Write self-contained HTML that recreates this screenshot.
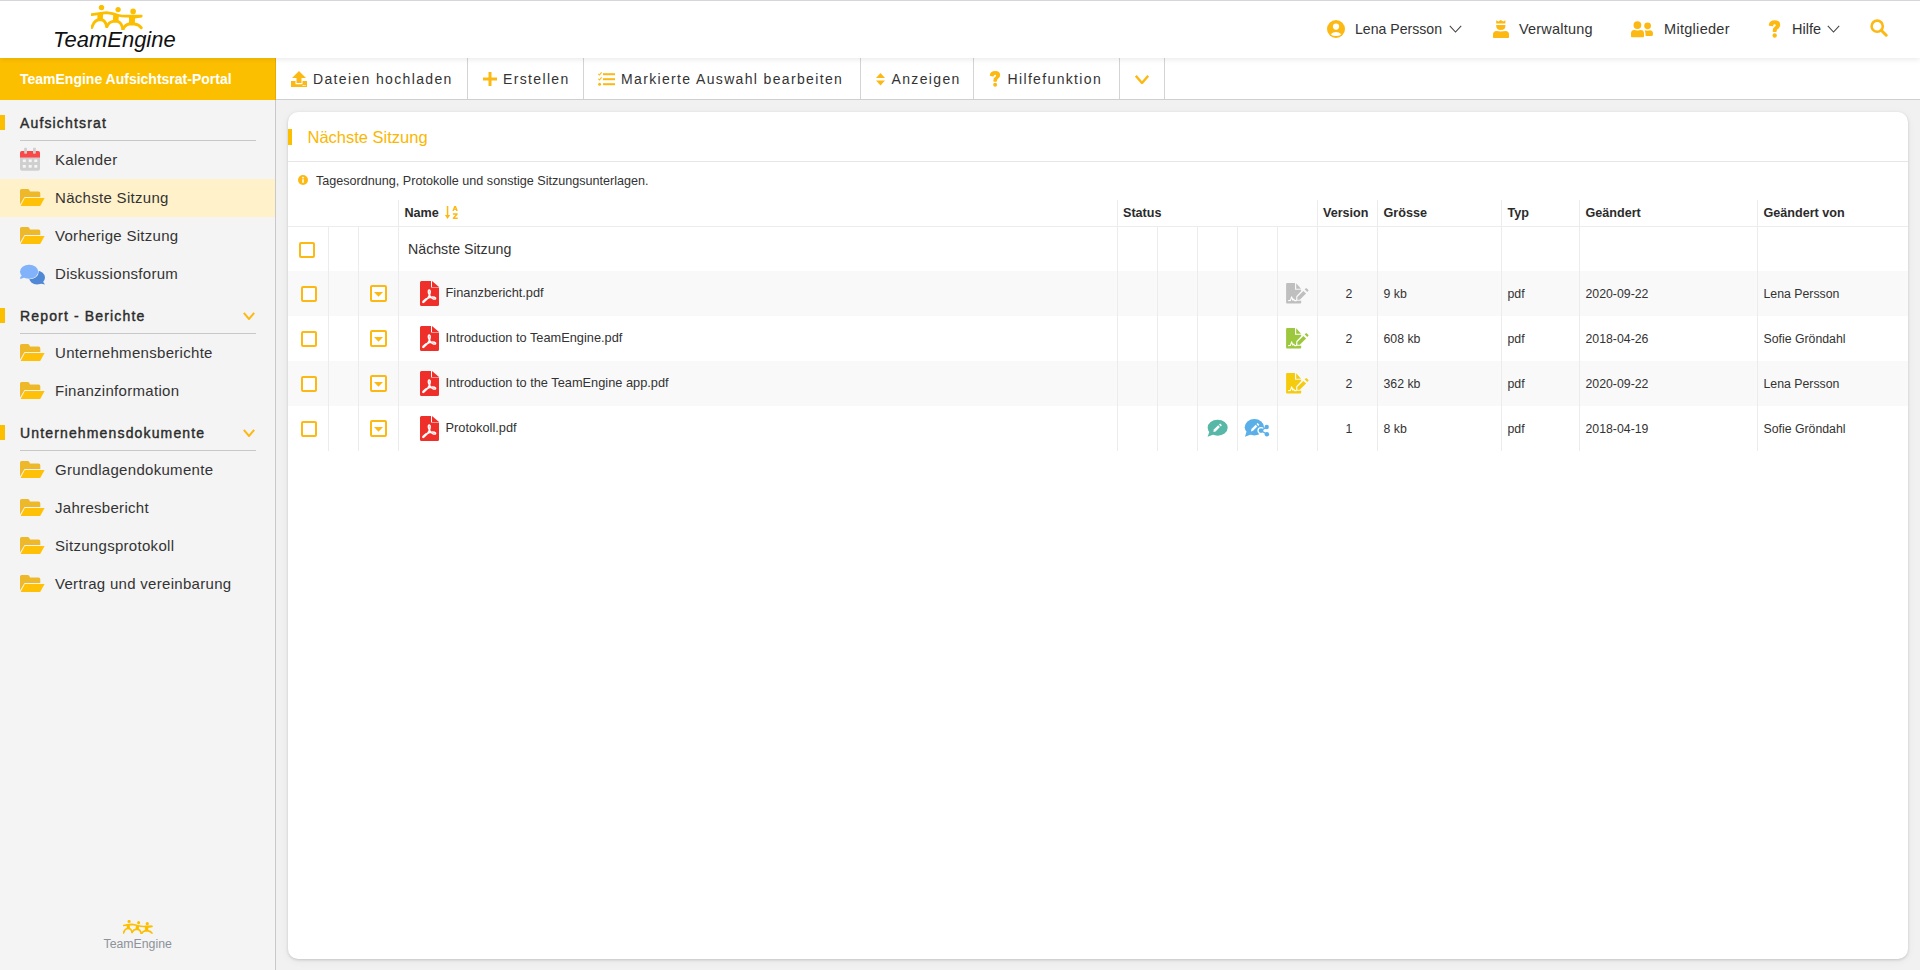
<!DOCTYPE html>
<html><head><meta charset="utf-8"><title>TeamEngine</title>
<style>
html,body{margin:0;padding:0;}
body{width:1920px;height:970px;overflow:hidden;position:relative;background:#F1F1F1;font-family:"Liberation Sans", sans-serif;}
.t{position:absolute;white-space:nowrap;line-height:1;}
</style></head><body>
<div style="position:absolute;left:0px;top:0px;width:1920px;height:58px;background:#fff;z-index:3;box-shadow:0 1px 6px rgba(0,0,0,0.10)"></div><div style="position:absolute;left:0px;top:0px;width:1920px;height:1px;background:#d5d5da;z-index:4"></div><div style="position:absolute;left:0;top:0;z-index:5"><svg style="position:absolute;left:91px;top:5px" width="52" height="25" viewBox="0 0 52 25"><g fill="#FCBF00"><circle cx="10.5" cy="2.6" r="2.75"/><circle cx="27.1" cy="4.6" r="2.65"/><circle cx="42.1" cy="6.4" r="2.8"/><path d="M37.5 10 L50.6 9.9 Q51.3 11.3 50.6 12.3 Q47 13.2 44 13.6 L38 13.6Z"/></g><g fill="none" stroke="#FCBF00" stroke-linecap="round" stroke-linejoin="round"><path d="M0.6 9.7 Q8 8.6 15.3 7.6 Q22 8.5 27 10.2 Q31 11.3 36 11.2 L50.3 11.1" stroke-width="2.7"/><path d="M9.3 8.8 L9 15.8" stroke-width="5.6" stroke-linecap="butt"/><path d="M25.1 9.6 L24.6 17" stroke-width="5.6" stroke-linecap="butt"/><path d="M41.1 10.8 L40.9 19" stroke-width="5.9" stroke-linecap="butt"/><path d="M0.8 22.5 Q3 15.5 7.5 14.8 L10.5 14.8 Q14.5 15.5 15.8 21.6" stroke-width="2.9"/><path d="M15.8 21.6 Q18 17 22 16.4 L26.5 16.4 Q30.5 17.3 31.9 24.3" stroke-width="2.9"/><path d="M31.9 24.3 Q34 19.8 38 19 L43.5 19 Q48 19.7 50.3 22.8" stroke-width="2.9"/></g></svg></div><div class="t" style="left:53px;top:28.88px;font-size:22px;color:#111;font-weight:400;letter-spacing:0px;font-style:italic;z-index:5">TeamEngine</div><div style="position:absolute;left:0;top:0;z-index:5"><svg style="position:absolute;left:1327px;top:20px" width="18" height="18" viewBox="0 0 18 18"><circle cx="9" cy="9" r="9" fill="#FDB913"/><circle cx="9" cy="6.6" r="3.1" fill="#fff"/><path d="M3.6 14.2 Q9 9.6 14.4 14.2 Q12.6 16.1 9 16.1 Q5.4 16.1 3.6 14.2Z" fill="#fff"/></svg></div><div class="t" style="left:1355px;top:22.26px;font-size:14.1px;color:#333333;font-weight:400;letter-spacing:0px;z-index:5">Lena Persson</div><div style="position:absolute;z-index:5"><svg style="position:absolute;left:1449px;top:25px" width="13" height="8" viewBox="0 0 13 8"><path d="M0.8 0.8 L6.5 7 L12.2 0.8" fill="none" stroke="#444" stroke-width="1.1"/></svg></div><div style="position:absolute;z-index:5"><svg style="position:absolute;left:1493px;top:20px" width="16" height="18" viewBox="0 0 16 18"><g fill="#FDB913"><path d="M3.2 0.2 L5.3 1.4 L7.8 0 L10.3 1.4 L12.4 0.2 L12.4 3.5 L3.2 3.5Z"/><path d="M3.2 5 L12.4 5 L12.4 6 Q12.4 9.9 7.8 9.9 Q3.2 9.9 3.2 6Z"/><path d="M0 17 L0 14.5 Q0 11 3.5 10.9 Q5.5 10.9 7.8 11.4 Q10.2 10.9 12.5 10.9 Q16 11 16 14.5 L16 17 Q16 18.1 14.9 18.1 L1.1 18.1 Q0 18.1 0 17Z"/></g></svg></div><div class="t" style="left:1519px;top:21.93px;font-size:14.5px;color:#333333;font-weight:400;letter-spacing:0.2px;z-index:5">Verwaltung</div><div style="position:absolute;z-index:5"><svg style="position:absolute;left:1631px;top:21px" width="23" height="17" viewBox="0 0 23 17"><g fill="#FDB913"><circle cx="6.4" cy="4.1" r="3.9"/><circle cx="16.6" cy="4.8" r="3.4"/><path d="M0 15.2 L0 12.5 Q0 9.2 3 9.1 Q4.8 9.1 6.4 9.6 Q8 9.1 10 9.1 Q13 9.2 13 12.5 L13 15.2 Q13 16.2 12 16.2 L1 16.2 Q0 16.2 0 15.2Z"/><path d="M13.8 9.3 Q15.5 9.3 16.6 9.7 Q18 9.3 19 9.3 Q22 9.5 22 12.5 Q22 15 21 15 L14.6 15 Q14.6 12 13.8 9.3Z"/></g></svg></div><div class="t" style="left:1664px;top:21.93px;font-size:14.5px;color:#333333;font-weight:400;letter-spacing:0.3px;z-index:5">Mitglieder</div><div style="position:absolute;z-index:5"><svg style="position:absolute;left:1768px;top:20px" width="13" height="18" viewBox="0 0 12.5 17"><path d="M1.5 4.6 Q2 0.8 6.5 0.8 Q11 0.8 11 4.6 Q11 6.8 8.6 8.2 Q7.6 8.8 7.6 10.6 L5.2 10.6 Q5.2 7.8 7 6.8 Q8.2 6 8.2 4.8 Q8.2 3.2 6.4 3.2 Q4.6 3.2 4.2 5.2Z" fill="#FDB913" stroke="#FDB913" stroke-width="1.5" stroke-linejoin="round"/><circle cx="6.4" cy="14.7" r="2.1" fill="#FDB913"/></svg></div><div class="t" style="left:1792px;top:21.93px;font-size:14.5px;color:#333333;font-weight:400;letter-spacing:0px;z-index:5">Hilfe</div><div style="position:absolute;z-index:5"><svg style="position:absolute;left:1827px;top:25px" width="13" height="8" viewBox="0 0 13 8"><path d="M0.8 0.8 L6.5 7 L12.2 0.8" fill="none" stroke="#444" stroke-width="1.1"/></svg></div><div style="position:absolute;z-index:5"><svg style="position:absolute;left:1870px;top:19px" width="18" height="18" viewBox="0 0 18 18"><circle cx="7.2" cy="7.2" r="5.6" fill="none" stroke="#FDB913" stroke-width="2.6"/><path d="M11.2 11.2 L16.2 16.2" stroke="#FDB913" stroke-width="3" stroke-linecap="round"/></svg></div><div style="position:absolute;left:0px;top:58px;width:275px;height:42px;background:#FCBF00"></div><div style="position:absolute;left:275px;top:58px;width:1px;height:42px;background:#E3AC00"></div><div class="t" style="left:20px;top:71.90px;font-size:14px;color:#fff;font-weight:700;letter-spacing:0px;">TeamEngine Aufsichtsrat-Portal</div><div style="position:absolute;left:276px;top:58px;width:1644px;height:41px;background:#fff"></div><div style="position:absolute;left:276px;top:99px;width:1644px;height:1px;background:#cfcfcf"></div><div style="position:absolute;left:467px;top:58px;width:1px;height:41px;background:#d4d4d4"></div><div style="position:absolute;left:583px;top:58px;width:1px;height:41px;background:#d4d4d4"></div><div style="position:absolute;left:860px;top:58px;width:1px;height:41px;background:#d4d4d4"></div><div style="position:absolute;left:973px;top:58px;width:1px;height:41px;background:#d4d4d4"></div><div style="position:absolute;left:1119px;top:58px;width:1px;height:41px;background:#d4d4d4"></div><div style="position:absolute;left:1164px;top:58px;width:1px;height:41px;background:#d4d4d4"></div><svg style="position:absolute;left:291px;top:71px" width="16" height="16" viewBox="0 0 16 16"><g fill="#FDB913"><path d="M8 0 L15 7 L10.5 7 L10.5 12 L5.5 12 L5.5 7 L1 7Z"/><path d="M0 10 L4.5 10 L4.5 13.2 L11.5 13.2 L11.5 10 L16 10 L16 16 L0 16Z"/></g><rect x="11.6" y="14" width="1.2" height="1" fill="#fff"/><rect x="13.4" y="14" width="1.2" height="1" fill="#fff"/></svg><div class="t" style="left:313px;top:71.85px;font-size:14px;color:#333333;font-weight:400;letter-spacing:1.35px;">Dateien hochladen</div><svg style="position:absolute;left:482.5px;top:72px" width="14" height="14" viewBox="0 0 14 14"><path d="M7 0 V14 M0 7 H14" stroke="#FDB913" stroke-width="3"/></svg><div class="t" style="left:503px;top:71.85px;font-size:14px;color:#333333;font-weight:400;letter-spacing:1.35px;">Erstellen</div><svg style="position:absolute;left:598px;top:72px" width="17" height="14" viewBox="0 0 17 14"><g fill="#FDB913"><rect x="5" y="1.2" width="12" height="2"/><rect x="5" y="6.2" width="12" height="2"/><rect x="5" y="11.2" width="12" height="2"/><circle cx="1.6" cy="12.2" r="1.5"/></g><path d="M0.3 1.8 L1.5 3 L3.6 0.4 M0.3 6.8 L1.5 8 L3.6 5.4" stroke="#FDB913" stroke-width="1.1" fill="none"/></svg><div class="t" style="left:621px;top:71.85px;font-size:14px;color:#333333;font-weight:400;letter-spacing:1.35px;">Markierte Auswahl bearbeiten</div><svg style="position:absolute;left:876px;top:73px" width="9" height="13" viewBox="0 0 9 13"><path d="M4.5 0 L9 5 L0 5Z M0 7.5 L9 7.5 L4.5 12.5Z" fill="#FDB913"/></svg><div class="t" style="left:891.5px;top:71.85px;font-size:14px;color:#333333;font-weight:400;letter-spacing:1.35px;">Anzeigen</div><svg style="position:absolute;left:989px;top:71px" width="12" height="16" viewBox="0 0 12.5 17"><path d="M1.5 4.6 Q2 0.8 6.5 0.8 Q11 0.8 11 4.6 Q11 6.8 8.6 8.2 Q7.6 8.8 7.6 10.6 L5.2 10.6 Q5.2 7.8 7 6.8 Q8.2 6 8.2 4.8 Q8.2 3.2 6.4 3.2 Q4.6 3.2 4.2 5.2Z" fill="#FDB913" stroke="#FDB913" stroke-width="1.5" stroke-linejoin="round"/><circle cx="6.4" cy="14.7" r="2.1" fill="#FDB913"/></svg><div class="t" style="left:1007.5px;top:71.85px;font-size:14px;color:#333333;font-weight:400;letter-spacing:1.35px;">Hilfefunktion</div><svg style="position:absolute;left:1135px;top:74.5px" width="14" height="9" viewBox="0 0 14 9"><path d="M0.8 0.8 L7.0 8 L13.2 0.8" fill="none" stroke="#FDB913" stroke-width="2.4"/></svg><div style="position:absolute;left:0px;top:100px;width:275px;height:870px;background:#F4F4F4"></div><div style="position:absolute;left:275px;top:100px;width:1px;height:870px;background:#c9c9c9"></div><div style="position:absolute;left:0px;top:115px;width:5px;height:15px;background:#FCBF00"></div><div class="t" style="left:20px;top:115.75px;font-size:14px;color:#2b2b2b;font-weight:400;letter-spacing:1.15px;-webkit-text-stroke:0.4px #2b2b2b">Aufsichtsrat</div><div style="position:absolute;left:20px;top:140px;width:236px;height:1px;background:#c8c8c8"></div><svg style="position:absolute;left:20px;top:147px" width="20" height="24" viewBox="0 0 20 24"><rect x="0" y="4" width="20" height="19.8" rx="2" fill="#CFCFCF"/><path d="M0 6 Q0 4 2 4 L18 4 Q20 4 20 6 L20 10.5 L0 10.5Z" fill="#FB4747"/><rect x="4.2" y="0.7" width="2.8" height="6" rx="0.8" fill="#CFCFCF"/><rect x="13" y="0.7" width="2.8" height="6" rx="0.8" fill="#CFCFCF"/><g fill="#F6F6F6"><rect x="2.8" y="12.5" width="3" height="2.6"/><rect x="8.7" y="12.5" width="3" height="2.6"/><rect x="14.3" y="12.5" width="3" height="2.6"/><rect x="2.8" y="18" width="3" height="2.7"/><rect x="8.7" y="18" width="3" height="2.7"/><rect x="14.3" y="18" width="3" height="2.7"/></g></svg><div class="t" style="left:55px;top:152.20px;font-size:15px;color:#333;font-weight:400;letter-spacing:0.3px;">Kalender</div><div style="position:absolute;left:0px;top:179px;width:275px;height:38px;background:#FFF1CA"></div><svg style="position:absolute;left:20px;top:189px" width="25" height="17" viewBox="0 0 25 17"><path d="M0 1.6 Q0 0 1.6 0 L7.8 0 Q8.6 0 9.2 0.8 L10 2.6 L18.6 2.6 Q20.3 2.6 20.3 4.3 L20.3 8 L4.5 8 L0 15.5Z" fill="#EDB92A"/><path d="M4.6 8.4 Q4.9 8.2 5.4 8.2 L25.2 8.2 L20.6 17.2 L0.1 17.2Z" fill="#fff" fill-opacity="0.0"/><path d="M4.8 9 L24.6 9 L20.2 16.9 L0.6 16.9Z" fill="#FFC107"/></svg><div class="t" style="left:55px;top:190.20px;font-size:15px;color:#333;font-weight:400;letter-spacing:0.3px;">Nächste Sitzung</div><svg style="position:absolute;left:20px;top:227px" width="25" height="17" viewBox="0 0 25 17"><path d="M0 1.6 Q0 0 1.6 0 L7.8 0 Q8.6 0 9.2 0.8 L10 2.6 L18.6 2.6 Q20.3 2.6 20.3 4.3 L20.3 8 L4.5 8 L0 15.5Z" fill="#EDB92A"/><path d="M4.6 8.4 Q4.9 8.2 5.4 8.2 L25.2 8.2 L20.6 17.2 L0.1 17.2Z" fill="#fff" fill-opacity="0.0"/><path d="M4.8 9 L24.6 9 L20.2 16.9 L0.6 16.9Z" fill="#FFC107"/></svg><div class="t" style="left:55px;top:228.20px;font-size:15px;color:#333;font-weight:400;letter-spacing:0.3px;">Vorherige Sitzung</div><svg style="position:absolute;left:19.5px;top:263.5px" width="27" height="22" viewBox="0 0 27 22"><ellipse cx="17" cy="13.6" rx="8" ry="6.8" fill="#5088D6"/><path d="M21.5 15.5 L25 20.6 L19 19.3Z" fill="#5088D6"/><path d="M1.5 10.5 L0 14.8 L5 13.5Z" fill="#82B3FA" stroke="#F4F4F4" stroke-width="0"/><ellipse cx="9.1" cy="7.8" rx="9.1" ry="7" fill="#82B3FA" stroke="#F4F4F4" stroke-width="1.1"/><ellipse cx="9.1" cy="7.8" rx="9.1" ry="7" fill="#82B3FA"/><path d="M2 10.8 L0.2 14.8 L5.5 13.3Z" fill="#82B3FA"/></svg><div class="t" style="left:55px;top:266.20px;font-size:15px;color:#333;font-weight:400;letter-spacing:0.3px;">Diskussionsforum</div><div style="position:absolute;left:0px;top:308px;width:5px;height:15px;background:#FCBF00"></div><div class="t" style="left:20px;top:308.75px;font-size:14px;color:#2b2b2b;font-weight:400;letter-spacing:1.15px;-webkit-text-stroke:0.4px #2b2b2b">Report - Berichte</div><div style="position:absolute;left:20px;top:333px;width:236px;height:1px;background:#c8c8c8"></div><svg style="position:absolute;left:243px;top:312px" width="12" height="8" viewBox="0 0 12 8"><path d="M0.8 0.8 L6.0 7 L11.2 0.8" fill="none" stroke="#FDB913" stroke-width="2"/></svg><svg style="position:absolute;left:20px;top:344px" width="25" height="17" viewBox="0 0 25 17"><path d="M0 1.6 Q0 0 1.6 0 L7.8 0 Q8.6 0 9.2 0.8 L10 2.6 L18.6 2.6 Q20.3 2.6 20.3 4.3 L20.3 8 L4.5 8 L0 15.5Z" fill="#EDB92A"/><path d="M4.6 8.4 Q4.9 8.2 5.4 8.2 L25.2 8.2 L20.6 17.2 L0.1 17.2Z" fill="#fff" fill-opacity="0.0"/><path d="M4.8 9 L24.6 9 L20.2 16.9 L0.6 16.9Z" fill="#FFC107"/></svg><div class="t" style="left:55px;top:345.20px;font-size:15px;color:#333;font-weight:400;letter-spacing:0.3px;">Unternehmensberichte</div><svg style="position:absolute;left:20px;top:382px" width="25" height="17" viewBox="0 0 25 17"><path d="M0 1.6 Q0 0 1.6 0 L7.8 0 Q8.6 0 9.2 0.8 L10 2.6 L18.6 2.6 Q20.3 2.6 20.3 4.3 L20.3 8 L4.5 8 L0 15.5Z" fill="#EDB92A"/><path d="M4.6 8.4 Q4.9 8.2 5.4 8.2 L25.2 8.2 L20.6 17.2 L0.1 17.2Z" fill="#fff" fill-opacity="0.0"/><path d="M4.8 9 L24.6 9 L20.2 16.9 L0.6 16.9Z" fill="#FFC107"/></svg><div class="t" style="left:55px;top:383.20px;font-size:15px;color:#333;font-weight:400;letter-spacing:0.3px;">Finanzinformation</div><div style="position:absolute;left:0px;top:425px;width:5px;height:15px;background:#FCBF00"></div><div class="t" style="left:20px;top:425.75px;font-size:14px;color:#2b2b2b;font-weight:400;letter-spacing:1.15px;-webkit-text-stroke:0.4px #2b2b2b">Unternehmensdokumente</div><div style="position:absolute;left:20px;top:450px;width:236px;height:1px;background:#c8c8c8"></div><svg style="position:absolute;left:243px;top:429px" width="12" height="8" viewBox="0 0 12 8"><path d="M0.8 0.8 L6.0 7 L11.2 0.8" fill="none" stroke="#FDB913" stroke-width="2"/></svg><svg style="position:absolute;left:20px;top:461px" width="25" height="17" viewBox="0 0 25 17"><path d="M0 1.6 Q0 0 1.6 0 L7.8 0 Q8.6 0 9.2 0.8 L10 2.6 L18.6 2.6 Q20.3 2.6 20.3 4.3 L20.3 8 L4.5 8 L0 15.5Z" fill="#EDB92A"/><path d="M4.6 8.4 Q4.9 8.2 5.4 8.2 L25.2 8.2 L20.6 17.2 L0.1 17.2Z" fill="#fff" fill-opacity="0.0"/><path d="M4.8 9 L24.6 9 L20.2 16.9 L0.6 16.9Z" fill="#FFC107"/></svg><div class="t" style="left:55px;top:462.20px;font-size:15px;color:#333;font-weight:400;letter-spacing:0.3px;">Grundlagendokumente</div><svg style="position:absolute;left:20px;top:499px" width="25" height="17" viewBox="0 0 25 17"><path d="M0 1.6 Q0 0 1.6 0 L7.8 0 Q8.6 0 9.2 0.8 L10 2.6 L18.6 2.6 Q20.3 2.6 20.3 4.3 L20.3 8 L4.5 8 L0 15.5Z" fill="#EDB92A"/><path d="M4.6 8.4 Q4.9 8.2 5.4 8.2 L25.2 8.2 L20.6 17.2 L0.1 17.2Z" fill="#fff" fill-opacity="0.0"/><path d="M4.8 9 L24.6 9 L20.2 16.9 L0.6 16.9Z" fill="#FFC107"/></svg><div class="t" style="left:55px;top:500.20px;font-size:15px;color:#333;font-weight:400;letter-spacing:0.3px;">Jahresbericht</div><svg style="position:absolute;left:20px;top:537px" width="25" height="17" viewBox="0 0 25 17"><path d="M0 1.6 Q0 0 1.6 0 L7.8 0 Q8.6 0 9.2 0.8 L10 2.6 L18.6 2.6 Q20.3 2.6 20.3 4.3 L20.3 8 L4.5 8 L0 15.5Z" fill="#EDB92A"/><path d="M4.6 8.4 Q4.9 8.2 5.4 8.2 L25.2 8.2 L20.6 17.2 L0.1 17.2Z" fill="#fff" fill-opacity="0.0"/><path d="M4.8 9 L24.6 9 L20.2 16.9 L0.6 16.9Z" fill="#FFC107"/></svg><div class="t" style="left:55px;top:538.20px;font-size:15px;color:#333;font-weight:400;letter-spacing:0.3px;">Sitzungsprotokoll</div><svg style="position:absolute;left:20px;top:575px" width="25" height="17" viewBox="0 0 25 17"><path d="M0 1.6 Q0 0 1.6 0 L7.8 0 Q8.6 0 9.2 0.8 L10 2.6 L18.6 2.6 Q20.3 2.6 20.3 4.3 L20.3 8 L4.5 8 L0 15.5Z" fill="#EDB92A"/><path d="M4.6 8.4 Q4.9 8.2 5.4 8.2 L25.2 8.2 L20.6 17.2 L0.1 17.2Z" fill="#fff" fill-opacity="0.0"/><path d="M4.8 9 L24.6 9 L20.2 16.9 L0.6 16.9Z" fill="#FFC107"/></svg><div class="t" style="left:55px;top:576.20px;font-size:15px;color:#333;font-weight:400;letter-spacing:0.3px;">Vertrag und vereinbarung</div><svg style="position:absolute;left:123px;top:920px" width="30" height="14.4" viewBox="0 0 52 25"><g fill="#FCBF00"><circle cx="10.5" cy="2.6" r="2.75"/><circle cx="27.1" cy="4.6" r="2.65"/><circle cx="42.1" cy="6.4" r="2.8"/><path d="M37.5 10 L50.6 9.9 Q51.3 11.3 50.6 12.3 Q47 13.2 44 13.6 L38 13.6Z"/></g><g fill="none" stroke="#FCBF00" stroke-linecap="round" stroke-linejoin="round"><path d="M0.6 9.7 Q8 8.6 15.3 7.6 Q22 8.5 27 10.2 Q31 11.3 36 11.2 L50.3 11.1" stroke-width="2.7"/><path d="M9.3 8.8 L9 15.8" stroke-width="5.6" stroke-linecap="butt"/><path d="M25.1 9.6 L24.6 17" stroke-width="5.6" stroke-linecap="butt"/><path d="M41.1 10.8 L40.9 19" stroke-width="5.9" stroke-linecap="butt"/><path d="M0.8 22.5 Q3 15.5 7.5 14.8 L10.5 14.8 Q14.5 15.5 15.8 21.6" stroke-width="2.9"/><path d="M15.8 21.6 Q18 17 22 16.4 L26.5 16.4 Q30.5 17.3 31.9 24.3" stroke-width="2.9"/><path d="M31.9 24.3 Q34 19.8 38 19 L43.5 19 Q48 19.7 50.3 22.8" stroke-width="2.9"/></g></svg><div class="t" style="left:103.5px;top:937.59px;font-size:12.3px;color:#8d929b;font-weight:400;letter-spacing:0px;">TeamEngine</div><div style="position:absolute;left:288px;top:112px;width:1620px;height:847px;background:#fff;border-radius:10px;box-shadow:0 1px 3px rgba(0,0,0,0.16),0 2px 10px rgba(0,0,0,0.05)"></div><div style="position:absolute;left:288px;top:129px;width:4px;height:16px;background:#FCBF00"></div><div class="t" style="left:307.5px;top:128.83px;font-size:16.5px;color:#FBB700;font-weight:400;letter-spacing:0px;">Nächste Sitzung</div><div style="position:absolute;left:288px;top:161px;width:1620px;height:1px;background:#e6e6e6"></div><svg style="position:absolute;left:298px;top:175px" width="10" height="10" viewBox="0 0 10 10"><circle cx="5" cy="5" r="5" fill="#FDB913"/><rect x="4.2" y="4.2" width="1.6" height="3.6" fill="#fff"/><circle cx="5" cy="2.6" r="0.9" fill="#fff"/></svg><div class="t" style="left:316px;top:174.53px;font-size:12.6px;color:#333;font-weight:400;letter-spacing:0px;">Tagesordnung, Protokolle und sonstige Sitzungsunterlagen.</div><div style="position:absolute;left:288px;top:271px;width:1620px;height:45px;background:#F9F9F9"></div><div style="position:absolute;left:288px;top:361px;width:1620px;height:45px;background:#F9F9F9"></div><div style="position:absolute;left:398px;top:200px;width:1px;height:251px;background:#ececec"></div><div style="position:absolute;left:1117px;top:200px;width:1px;height:251px;background:#ececec"></div><div style="position:absolute;left:1317px;top:200px;width:1px;height:251px;background:#ececec"></div><div style="position:absolute;left:1377px;top:200px;width:1px;height:251px;background:#ececec"></div><div style="position:absolute;left:1501px;top:200px;width:1px;height:251px;background:#ececec"></div><div style="position:absolute;left:1579px;top:200px;width:1px;height:251px;background:#ececec"></div><div style="position:absolute;left:1757px;top:200px;width:1px;height:251px;background:#ececec"></div><div style="position:absolute;left:288px;top:226px;width:1620px;height:1px;background:#ececec"></div><div class="t" style="left:404.5px;top:206.53px;font-size:12.6px;color:#2b2b2b;font-weight:700;letter-spacing:0px;">Name</div><svg style="position:absolute;left:444px;top:205px" width="14" height="15" viewBox="0 0 14 15"><g fill="#FDB913"><rect x="2.8" y="1" width="1.5" height="9.5"/><path d="M0.9 10 L6.2 10 L3.55 14Z"/><path d="M8.4 6 L10.2 1 L12 1 L13.8 6 L12.2 6 L11.1 2.8 L9.9 6Z"/><rect x="9.6" y="3.9" width="3" height="1"/><path d="M8.9 8.3 L13.6 8.3 L13.6 9.7 L10.9 12.6 L13.7 12.6 L13.7 14 L8.8 14 L8.8 12.7 L11.5 9.7 L8.9 9.7Z"/></g></svg><div class="t" style="left:1123px;top:206.53px;font-size:12.6px;color:#2b2b2b;font-weight:700;letter-spacing:0px;">Status</div><div class="t" style="left:1323px;top:206.53px;font-size:12.6px;color:#2b2b2b;font-weight:700;letter-spacing:0px;">Version</div><div class="t" style="left:1383.5px;top:206.53px;font-size:12.6px;color:#2b2b2b;font-weight:700;letter-spacing:0px;">Grösse</div><div class="t" style="left:1507.5px;top:206.53px;font-size:12.6px;color:#2b2b2b;font-weight:700;letter-spacing:0px;">Typ</div><div class="t" style="left:1585.5px;top:206.53px;font-size:12.6px;color:#2b2b2b;font-weight:700;letter-spacing:0px;">Geändert</div><div class="t" style="left:1763.5px;top:206.53px;font-size:12.6px;color:#2b2b2b;font-weight:700;letter-spacing:0px;">Geändert von</div><div style="position:absolute;left:328px;top:227px;width:1px;height:224px;background:#ececec"></div><div style="position:absolute;left:358px;top:227px;width:1px;height:224px;background:#ececec"></div><div style="position:absolute;left:1157px;top:227px;width:1px;height:224px;background:#ececec"></div><div style="position:absolute;left:1197px;top:227px;width:1px;height:224px;background:#ececec"></div><div style="position:absolute;left:1237px;top:227px;width:1px;height:224px;background:#ececec"></div><div style="position:absolute;left:1277px;top:227px;width:1px;height:224px;background:#ececec"></div><div style="position:absolute;left:299px;top:241.5px;width:12px;height:12px;border:2px solid #FDB913;border-radius:2px;background:#fff;z-index:2"></div><div class="t" style="left:408px;top:242.28px;font-size:14.2px;color:#333;font-weight:400;letter-spacing:0px;">Nächste Sitzung</div><div style="position:absolute;left:300.5px;top:286px;width:12px;height:12px;border:2px solid #FDB913;border-radius:2px;background:#fff;z-index:2"></div><div style="position:absolute;left:370px;top:285px;width:13px;height:13px;border:2px solid #FDB913;border-radius:2px;background:#fff;z-index:2"></div><svg style="position:absolute;z-index:3;left:374px;top:292px" width="9" height="5" viewBox="0 0 9 5"><path d="M0 0 L9 0 L4.5 4.7Z" fill="#FDB913"/></svg><svg style="position:absolute;left:420px;top:281px" width="19" height="25" viewBox="0 0 19 25"><path d="M1.5 0 L11 0 L11 6.5 L19 6.5 L19 23.5 Q19 25 17.5 25 L1.5 25 Q0 25 0 23.5 L0 1.5 Q0 0 1.5 0Z" fill="#EE2F2A"/><path d="M12 0 L19 6 L12 6Z" fill="#EE2F2A"/><path d="M9.3 9 Q11 9.5 9.5 14 Q8 18 4 21 Q2.5 22 3 20.5 Q5 18 9.5 16.5 Q14 15.3 15.5 17 Q16 18.5 13.5 18 Q10.5 17 8.5 12 Q8 9 9.3 9Z" fill="none" stroke="#fff" stroke-width="1.5"/></svg><div class="t" style="left:445.5px;top:286.96px;font-size:12.8px;color:#333;font-weight:400;letter-spacing:0px;">Finanzbericht.pdf</div><svg style="position:absolute;left:1282px;top:281px" width="28" height="24" viewBox="0 0 28 24"><path d="M4.1 3.1 Q4.1 2.1 5.1 2.1 L13 2.1 L13 8.7 L19.2 8.7 L19.2 10 L14.3 15.2 L14.1 18.6 L13.6 19.8 L19.2 19.8 L19.2 21.5 Q19.2 22.5 18.2 22.5 L5.1 22.5 Q4.1 22.5 4.1 21.5Z" fill="#BFBFBF"/><path d="M14.2 2.3 L19 7.7 L14.2 7.7Z" fill="#BFBFBF"/><path d="M15.3 16.1 L21.4 9.9 L24.1 12.4 L17.8 18.8 L15.3 18.8Z" fill="#BFBFBF"/><path d="M22.6 8.3 L24.3 6.9 L26.7 9.3 L25.3 10.9Z" fill="#BFBFBF"/><path d="M6.2 19.6 L8.4 19.4 L9.6 15.8 L10.9 19.2 L11.8 18.2 L12.6 19.6 L14.5 19.6" fill="none" stroke="#fff" stroke-width="1.1" stroke-linejoin="round"/></svg><div class="t" style="left:1345.5px;top:287.59px;font-size:12.3px;color:#333;font-weight:400;letter-spacing:0px;">2</div><div class="t" style="left:1383.5px;top:287.59px;font-size:12.3px;color:#333;font-weight:400;letter-spacing:0px;">9 kb</div><div class="t" style="left:1507.5px;top:287.59px;font-size:12.3px;color:#333;font-weight:400;letter-spacing:0px;">pdf</div><div class="t" style="left:1585.5px;top:287.59px;font-size:12.3px;color:#333;font-weight:400;letter-spacing:0px;">2020-09-22</div><div class="t" style="left:1763.5px;top:287.59px;font-size:12.3px;color:#333;font-weight:400;letter-spacing:0px;">Lena Persson</div><div style="position:absolute;left:300.5px;top:331px;width:12px;height:12px;border:2px solid #FDB913;border-radius:2px;background:#fff;z-index:2"></div><div style="position:absolute;left:370px;top:330px;width:13px;height:13px;border:2px solid #FDB913;border-radius:2px;background:#fff;z-index:2"></div><svg style="position:absolute;z-index:3;left:374px;top:337px" width="9" height="5" viewBox="0 0 9 5"><path d="M0 0 L9 0 L4.5 4.7Z" fill="#FDB913"/></svg><svg style="position:absolute;left:420px;top:326px" width="19" height="25" viewBox="0 0 19 25"><path d="M1.5 0 L11 0 L11 6.5 L19 6.5 L19 23.5 Q19 25 17.5 25 L1.5 25 Q0 25 0 23.5 L0 1.5 Q0 0 1.5 0Z" fill="#EE2F2A"/><path d="M12 0 L19 6 L12 6Z" fill="#EE2F2A"/><path d="M9.3 9 Q11 9.5 9.5 14 Q8 18 4 21 Q2.5 22 3 20.5 Q5 18 9.5 16.5 Q14 15.3 15.5 17 Q16 18.5 13.5 18 Q10.5 17 8.5 12 Q8 9 9.3 9Z" fill="none" stroke="#fff" stroke-width="1.5"/></svg><div class="t" style="left:445.5px;top:331.96px;font-size:12.8px;color:#333;font-weight:400;letter-spacing:0px;">Introduction to TeamEngine.pdf</div><svg style="position:absolute;left:1282px;top:326px" width="28" height="24" viewBox="0 0 28 24"><path d="M4.1 3.1 Q4.1 2.1 5.1 2.1 L13 2.1 L13 8.7 L19.2 8.7 L19.2 10 L14.3 15.2 L14.1 18.6 L13.6 19.8 L19.2 19.8 L19.2 21.5 Q19.2 22.5 18.2 22.5 L5.1 22.5 Q4.1 22.5 4.1 21.5Z" fill="#9BC83C"/><path d="M14.2 2.3 L19 7.7 L14.2 7.7Z" fill="#9BC83C"/><path d="M15.3 16.1 L21.4 9.9 L24.1 12.4 L17.8 18.8 L15.3 18.8Z" fill="#9BC83C"/><path d="M22.6 8.3 L24.3 6.9 L26.7 9.3 L25.3 10.9Z" fill="#9BC83C"/><path d="M6.2 19.6 L8.4 19.4 L9.6 15.8 L10.9 19.2 L11.8 18.2 L12.6 19.6 L14.5 19.6" fill="none" stroke="#fff" stroke-width="1.1" stroke-linejoin="round"/></svg><div class="t" style="left:1345.5px;top:332.59px;font-size:12.3px;color:#333;font-weight:400;letter-spacing:0px;">2</div><div class="t" style="left:1383.5px;top:332.59px;font-size:12.3px;color:#333;font-weight:400;letter-spacing:0px;">608 kb</div><div class="t" style="left:1507.5px;top:332.59px;font-size:12.3px;color:#333;font-weight:400;letter-spacing:0px;">pdf</div><div class="t" style="left:1585.5px;top:332.59px;font-size:12.3px;color:#333;font-weight:400;letter-spacing:0px;">2018-04-26</div><div class="t" style="left:1763.5px;top:332.59px;font-size:12.3px;color:#333;font-weight:400;letter-spacing:0px;">Sofie Gröndahl</div><div style="position:absolute;left:300.5px;top:376px;width:12px;height:12px;border:2px solid #FDB913;border-radius:2px;background:#fff;z-index:2"></div><div style="position:absolute;left:370px;top:375px;width:13px;height:13px;border:2px solid #FDB913;border-radius:2px;background:#fff;z-index:2"></div><svg style="position:absolute;z-index:3;left:374px;top:382px" width="9" height="5" viewBox="0 0 9 5"><path d="M0 0 L9 0 L4.5 4.7Z" fill="#FDB913"/></svg><svg style="position:absolute;left:420px;top:371px" width="19" height="25" viewBox="0 0 19 25"><path d="M1.5 0 L11 0 L11 6.5 L19 6.5 L19 23.5 Q19 25 17.5 25 L1.5 25 Q0 25 0 23.5 L0 1.5 Q0 0 1.5 0Z" fill="#EE2F2A"/><path d="M12 0 L19 6 L12 6Z" fill="#EE2F2A"/><path d="M9.3 9 Q11 9.5 9.5 14 Q8 18 4 21 Q2.5 22 3 20.5 Q5 18 9.5 16.5 Q14 15.3 15.5 17 Q16 18.5 13.5 18 Q10.5 17 8.5 12 Q8 9 9.3 9Z" fill="none" stroke="#fff" stroke-width="1.5"/></svg><div class="t" style="left:445.5px;top:376.96px;font-size:12.8px;color:#333;font-weight:400;letter-spacing:0px;">Introduction to the TeamEngine app.pdf</div><svg style="position:absolute;left:1282px;top:371px" width="28" height="24" viewBox="0 0 28 24"><path d="M4.1 3.1 Q4.1 2.1 5.1 2.1 L13 2.1 L13 8.7 L19.2 8.7 L19.2 10 L14.3 15.2 L14.1 18.6 L13.6 19.8 L19.2 19.8 L19.2 21.5 Q19.2 22.5 18.2 22.5 L5.1 22.5 Q4.1 22.5 4.1 21.5Z" fill="#F5CB0E"/><path d="M14.2 2.3 L19 7.7 L14.2 7.7Z" fill="#F5CB0E"/><path d="M15.3 16.1 L21.4 9.9 L24.1 12.4 L17.8 18.8 L15.3 18.8Z" fill="#F5CB0E"/><path d="M22.6 8.3 L24.3 6.9 L26.7 9.3 L25.3 10.9Z" fill="#F5CB0E"/><path d="M6.2 19.6 L8.4 19.4 L9.6 15.8 L10.9 19.2 L11.8 18.2 L12.6 19.6 L14.5 19.6" fill="none" stroke="#fff" stroke-width="1.1" stroke-linejoin="round"/></svg><div class="t" style="left:1345.5px;top:377.59px;font-size:12.3px;color:#333;font-weight:400;letter-spacing:0px;">2</div><div class="t" style="left:1383.5px;top:377.59px;font-size:12.3px;color:#333;font-weight:400;letter-spacing:0px;">362 kb</div><div class="t" style="left:1507.5px;top:377.59px;font-size:12.3px;color:#333;font-weight:400;letter-spacing:0px;">pdf</div><div class="t" style="left:1585.5px;top:377.59px;font-size:12.3px;color:#333;font-weight:400;letter-spacing:0px;">2020-09-22</div><div class="t" style="left:1763.5px;top:377.59px;font-size:12.3px;color:#333;font-weight:400;letter-spacing:0px;">Lena Persson</div><div style="position:absolute;left:300.5px;top:421px;width:12px;height:12px;border:2px solid #FDB913;border-radius:2px;background:#fff;z-index:2"></div><div style="position:absolute;left:370px;top:420px;width:13px;height:13px;border:2px solid #FDB913;border-radius:2px;background:#fff;z-index:2"></div><svg style="position:absolute;z-index:3;left:374px;top:427px" width="9" height="5" viewBox="0 0 9 5"><path d="M0 0 L9 0 L4.5 4.7Z" fill="#FDB913"/></svg><svg style="position:absolute;left:420px;top:416px" width="19" height="25" viewBox="0 0 19 25"><path d="M1.5 0 L11 0 L11 6.5 L19 6.5 L19 23.5 Q19 25 17.5 25 L1.5 25 Q0 25 0 23.5 L0 1.5 Q0 0 1.5 0Z" fill="#EE2F2A"/><path d="M12 0 L19 6 L12 6Z" fill="#EE2F2A"/><path d="M9.3 9 Q11 9.5 9.5 14 Q8 18 4 21 Q2.5 22 3 20.5 Q5 18 9.5 16.5 Q14 15.3 15.5 17 Q16 18.5 13.5 18 Q10.5 17 8.5 12 Q8 9 9.3 9Z" fill="none" stroke="#fff" stroke-width="1.5"/></svg><div class="t" style="left:445.5px;top:421.96px;font-size:12.8px;color:#333;font-weight:400;letter-spacing:0px;">Protokoll.pdf</div><svg style="position:absolute;left:1202px;top:414px" width="30" height="26" viewBox="0 0 30 26"><ellipse cx="15.65" cy="13.65" rx="10" ry="8" fill="#58B8A7"/><path d="M7.5 17.5 L5.6 22.7 L11.5 20.6Z" fill="#58B8A7"/><path d="M11.4 18 L11.8 15.6 L16.2 11.3 L17.9 13 L13.6 17.4Z" fill="#fff"/><path d="M17 10.6 L18.1 9.5 L19.9 11.3 L18.8 12.4Z" fill="#fff"/></svg><svg style="position:absolute;left:1240px;top:414px" width="32" height="26" viewBox="0 0 32 26"><ellipse cx="14.4" cy="13.2" rx="9.7" ry="8.2" fill="#5AAFE8"/><path d="M6.5 17.5 L5 22.8 L10.8 20.5Z" fill="#5AAFE8"/><path d="M11 17.4 L11.4 15 L15.7 10.8 L17.4 12.5 L13.1 16.8Z" fill="#fff"/><path d="M16.5 10.1 L17.6 9 L19.4 10.8 L18.3 11.9Z" fill="#fff"/><circle cx="21" cy="16.6" r="3.6" fill="#fff"/><path d="M21 16.6 L26.7 13 M21 16.6 L26.9 20.2" stroke="#5AAFE8" stroke-width="1.3"/><circle cx="21" cy="16.6" r="2.3" fill="#5AAFE8"/><circle cx="26.7" cy="13" r="2.2" fill="#5AAFE8"/><circle cx="26.9" cy="20.2" r="2.2" fill="#5AAFE8"/></svg><div class="t" style="left:1345.5px;top:422.59px;font-size:12.3px;color:#333;font-weight:400;letter-spacing:0px;">1</div><div class="t" style="left:1383.5px;top:422.59px;font-size:12.3px;color:#333;font-weight:400;letter-spacing:0px;">8 kb</div><div class="t" style="left:1507.5px;top:422.59px;font-size:12.3px;color:#333;font-weight:400;letter-spacing:0px;">pdf</div><div class="t" style="left:1585.5px;top:422.59px;font-size:12.3px;color:#333;font-weight:400;letter-spacing:0px;">2018-04-19</div><div class="t" style="left:1763.5px;top:422.59px;font-size:12.3px;color:#333;font-weight:400;letter-spacing:0px;">Sofie Gröndahl</div>
</body></html>
